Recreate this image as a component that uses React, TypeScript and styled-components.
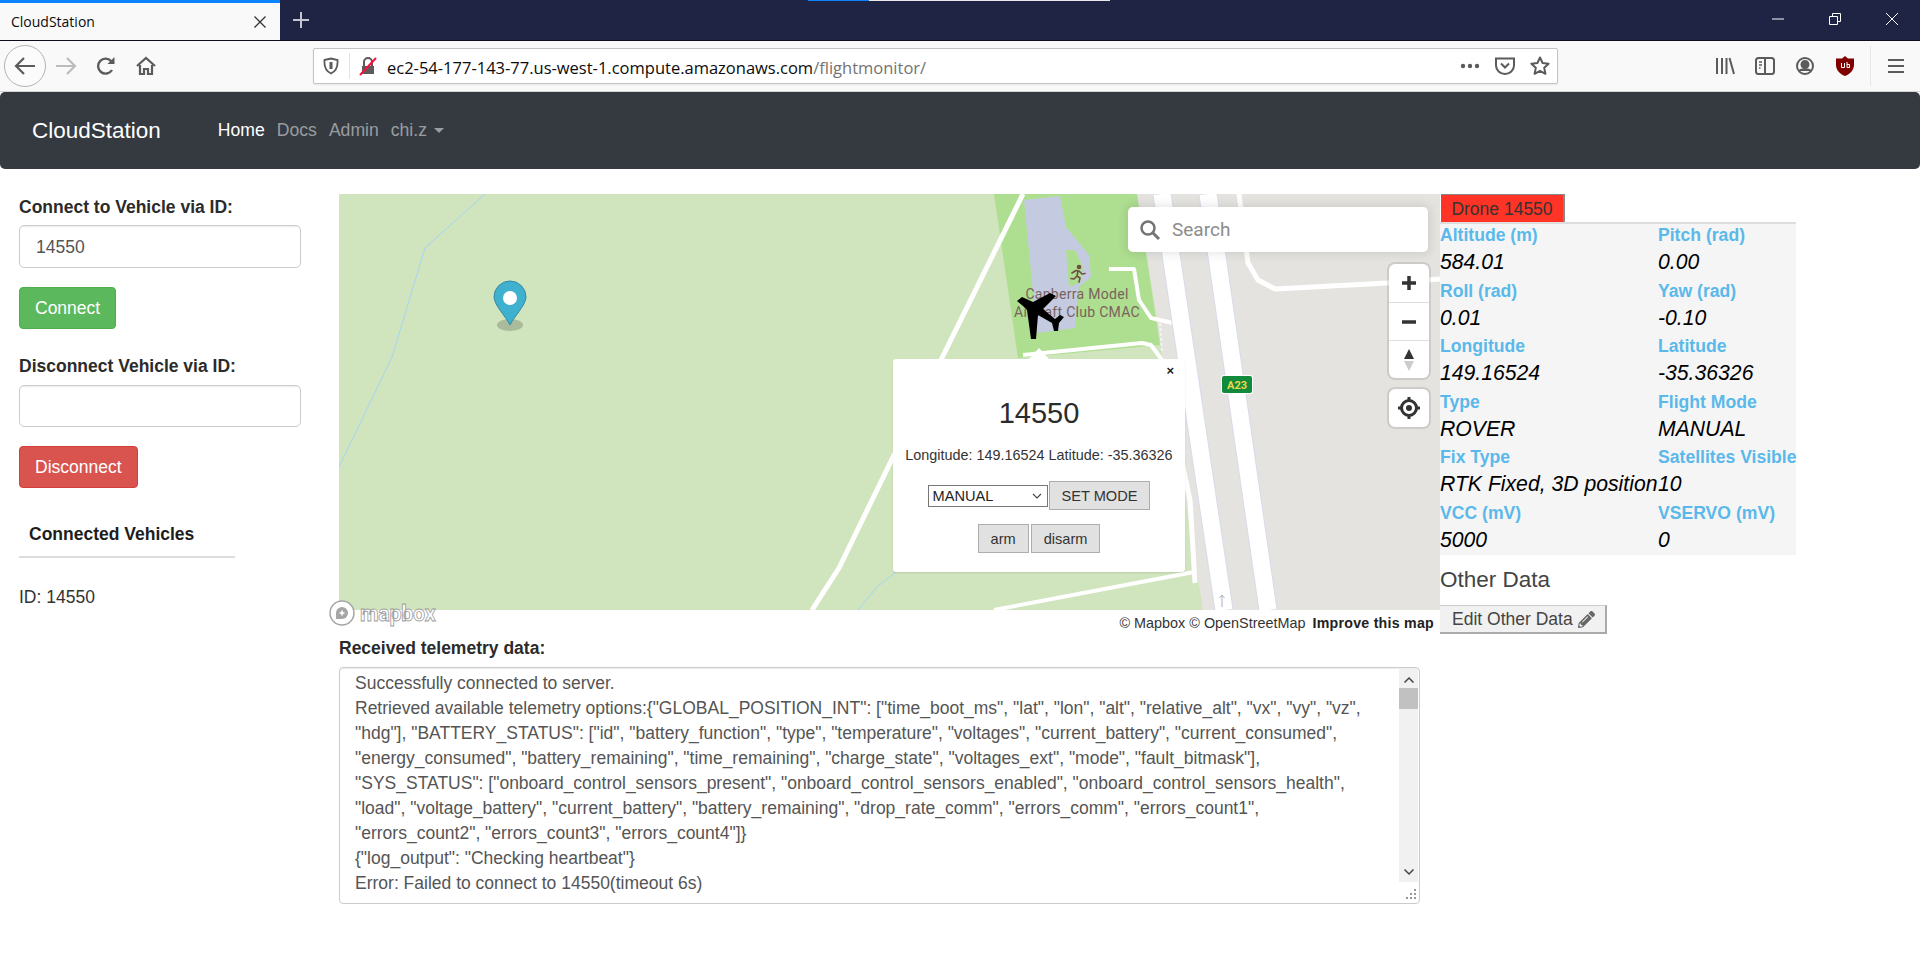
import * as React from "react";
import styled, { createGlobalStyle } from "styled-components";
import { FaPencilAlt } from "react-icons/fa";

const GlobalStyle = createGlobalStyle`
  html, body {
    margin: 0;
    padding: 0;
    background: #fff;
    font-family: "Liberation Sans", Arial, sans-serif;
    color: #333;
  }
  * { box-sizing: border-box; }
`;

const Page = styled.div`
  width: 1920px;
  height: 972px;
  overflow: hidden;
`;

/* browser chrome */
const TitleBar = styled.div`
  height: 41px;
  background: #1f2344;
  display: flex;
  align-items: stretch;
  position: relative;
  border-bottom: 1px solid #0c0c1a;
`;

const Tab = styled.div`
  width: 280px;
  background: #f9f9fa;
  border-top: 3px solid #0a84ff;
  display: flex;
  align-items: center;
  justify-content: space-between;
  padding: 0 13px 0 11px;
  font: 14px "Open Sans", sans-serif;
  color: #0c0c0d;
`;

const NewTab = styled.div`
  width: 42px;
  display: flex;
  align-items: center;
  justify-content: center;
`;

const Progress = styled.div`
  position: absolute;
  left: 808px;
  top: 0;
  width: 302px;
  height: 1px;
  background: linear-gradient(to right, #0a84ff 61px, #e8e8ec 61px);
`;

const WindowButtons = styled.div`
  margin-left: auto;
  display: flex;
`;

const WindowButton = styled.div`
  width: 57px;
  display: flex;
  align-items: center;
  justify-content: center;
  padding-bottom: 2px;
`;

const Toolbar = styled.div`
  height: 51px;
  background: #f9f9fa;
  display: flex;
  align-items: center;
  border-bottom: 1px solid #d4d4d6;
  padding-left: 4px;
`;

const BackCircle = styled.div`
  width: 42px;
  height: 42px;
  border-radius: 50%;
  border: 1px solid #b4b4b6;
  background: #fbfbfb;
  display: flex;
  align-items: center;
  justify-content: center;
  flex: none;
`;

const ToolIcon = styled.div<{ $w?: number }>`
  width: ${(p) => p.$w ?? 40}px;
  height: 32px;
  display: flex;
  align-items: center;
  justify-content: center;
  flex: none;
`;

const UrlBar = styled.div`
  width: 1245px;
  height: 36px;
  margin-left: 147px;
  margin-right: 147px;
  background: #fff;
  border: 1px solid #c4c4c6;
  border-radius: 2px;
  display: flex;
  align-items: center;
  box-shadow: 0 1px 2px rgba(0, 0, 0, 0.08);
  flex: none;
  padding-left: 7px;
`;

const UrlDivider = styled.div`
  width: 1px;
  height: 26px;
  background: #e2e2e4;
  margin: 0 8px 0 8px;
`;

const UrlText = styled.div`
  font: 16.5px "Open Sans", sans-serif;
  color: #0c0c0d;
  margin-left: 9px;
  padding-top: 3px;
  flex: 1;
  white-space: nowrap;
  span { color: #737373; }
`;

const ToolSeparator = styled.div`
  width: 1px;
  height: 40px;
  background: #e6e6e8;
  margin: 0 5px 0 5px;
`;

/* navbar */
const Navbar = styled.nav`
  height: 77px;
  background: #343a40;
  border-radius: 5px;
  display: flex;
  align-items: center;
  padding-left: 32px;
`;

const Brand = styled.div`
  font-size: 22.5px;
  color: #fff;
  margin-right: 57px;
`;

const NavLink = styled.div<{ $active?: boolean }>`
  font-size: 17.6px;
  color: ${(p) => (p.$active ? "#fff" : "rgba(255,255,255,.5)")};
  margin-right: 12px;
  display: flex;
  align-items: center;
`;

const Caret = styled.span`
  width: 0;
  height: 0;
  margin-left: 7px;
  border-top: 5px solid rgba(255, 255, 255, 0.5);
  border-left: 5px solid transparent;
  border-right: 5px solid transparent;
`;

/* page columns */
const Content = styled.div`
  display: flex;
  padding-top: 25px;
`;

const LeftColumn = styled.aside`
  width: 339px;
  flex: none;
  padding-left: 19px;
`;

const FieldLabel = styled.label<{ $line: number }>`
  display: block;
  font-size: 17.5px;
  font-weight: bold;
  color: #2b2b2b;
  height: 31px;
  line-height: ${(p) => p.$line}px;
`;

const TextInput = styled.input<{ $h: number }>`
  display: block;
  width: 282px;
  height: ${(p) => p.$h}px;
  margin-bottom: 19px;
  border: 1px solid #ccc;
  border-radius: 5px;
  padding: 1px 16px 0;
  font: 17.5px "Liberation Sans", sans-serif;
  color: #555;
  box-shadow: inset 0 1px 1px rgba(0, 0, 0, 0.075);
  outline: none;
`;

const ActionButton = styled.button<{ $tone: "go" | "stop" }>`
  display: block;
  height: 42px;
  margin: 0 0 25px;
  padding: 0 15px;
  border: 1px solid ${(p) => (p.$tone === "go" ? "#4cae4c" : "#d43f3a")};
  border-radius: 4px;
  background: ${(p) => (p.$tone === "go" ? "#5cb85c" : "#d9534f")};
  color: #fff;
  font: 17.5px "Liberation Sans", sans-serif;
`;

const VehiclesTitle = styled.div`
  width: 216px;
  padding: 0 0 9px 10px;
  margin-top: 34px;
  font-size: 17.5px;
  font-weight: bold;
  line-height: 25px;
  color: #1d1d1d;
  border-bottom: 2px solid #ddd;
`;

const VehicleRow = styled.div`
  font-size: 17.5px;
  line-height: 25px;
  margin-top: 27px;
`;

const CenterColumn = styled.main`
  width: 1101px;
  flex: none;
`;

const MapFrame = styled.div`
  position: relative;
  width: 1101px;
  height: 416px;
`;

const MapDrawing = styled.svg`
  display: block;
`;

const SearchBox = styled.div`
  position: absolute;
  left: 789px;
  top: 13px;
  width: 300px;
  height: 45px;
  background: #fff;
  border-radius: 5px;
  box-shadow: 0 0 10px 2px rgba(0, 0, 0, 0.1);
  display: flex;
  align-items: center;
  gap: 11px;
  padding-left: 11px;
  font: 19px Roboto, sans-serif;
  color: #8c8c8c;
`;

const ControlGroup = styled.div<{ $top: number }>`
  position: absolute;
  left: 1050px;
  top: ${(p) => p.$top}px;
  width: 40px;
  background: #fff;
  border-radius: 6px;
  box-shadow: 0 0 0 2px rgba(0, 0, 0, 0.1);
`;

const ControlCell = styled.div`
  height: 38px;
  display: flex;
  align-items: center;
  justify-content: center;
  & + & { border-top: 1px solid #ddd; }
`;

const Popup = styled.div`
  position: absolute;
  left: 554px;
  top: 165px;
  width: 292px;
  height: 213px;
  background: #fff;
  border-radius: 3px;
  box-shadow: 0 1px 2px rgba(0, 0, 0, 0.1);
  display: flex;
  flex-direction: column;
  align-items: center;
  padding-top: 38px;
  &::before {
    content: "";
    position: absolute;
    left: 136px;
    top: -11px;
    border-left: 10px solid transparent;
    border-right: 10px solid transparent;
    border-bottom: 11px solid #fff;
  }
`;

const PopupClose = styled.div`
  position: absolute;
  right: 11px;
  top: 4px;
  font-size: 13px;
  font-weight: bold;
  color: #222;
`;

const PopupTitle = styled.div`
  font-size: 29px;
  line-height: 33px;
  color: #2b2b2b;
`;

const PopupCoords = styled.div`
  font-size: 14.4px;
  line-height: 20px;
  margin-top: 15px;
  white-space: nowrap;
`;

const PopupRow = styled.div<{ $gap: number }>`
  display: flex;
  align-items: center;
  gap: 2px;
  margin-top: ${(p) => p.$gap}px;
`;

const ModeSelect = styled.select`
  appearance: none;
  width: 120px;
  height: 22px;
  margin-right: -1px;
  border: 1px solid #767676;
  border-radius: 0;
  background: #fff url("data:image/svg+xml,%3Csvg xmlns='http://www.w3.org/2000/svg' width='10' height='6'%3E%3Cpath d='M1 1l4 4 4-4' fill='none' stroke='%23444' stroke-width='1.100'/%3E%3C/svg%3E") no-repeat right 5px center;
  font: 14.6px "Liberation Sans", sans-serif;
  color: #222;
  padding: 0 0 0 4px;
`;

const PopupButton = styled.button`
  height: 29px;
  padding: 0 12px;
  background: #e1e1e1;
  border: 1px solid #adadad;
  font: 14.6px "Liberation Sans", sans-serif;
  color: #333;
`;

const MapLogo = styled.div`
  position: absolute;
  left: -10px;
  top: 406px;
  display: flex;
  align-items: center;
  gap: 5px;
`;

const LogoWord = styled.span`
  font: bold 21.5px Roboto, sans-serif;
  color: #fff;
  -webkit-text-stroke: 0.8px #9a9a9a;
  letter-spacing: -0.3px;
`;

const Attribution = styled.div`
  height: 26px;
  display: flex;
  justify-content: flex-end;
  align-items: center;
  padding: 0 6px 0 0;
  gap: 7px;
  font-size: 14.4px;
  color: #333;
  b { font-size: 14.2px; letter-spacing: 0.25px; color: #222; }
`;

const LogTitle = styled.div`
  font-size: 17.5px;
  font-weight: bold;
  line-height: 25px;
  color: #2b2b2b;
  height: 31px;
`;

const LogBox = styled.div`
  position: relative;
  width: 1081px;
  height: 237px;
  border: 1px solid #ccc;
  border-radius: 4px;
  padding: 3px 30px 0 15px;
  font-size: 17.5px;
  line-height: 25px;
  color: #555;
  box-shadow: inset 0 1px 1px rgba(0, 0, 0, 0.075);
`;

const LogLine = styled.div`
  white-space: nowrap;
`;

const ScrollTrack = styled.div`
  position: absolute;
  right: 1px;
  top: 1px;
  bottom: 21px;
  width: 19px;
  background: #f1f1f1;
  display: flex;
  flex-direction: column;
  align-items: center;
  justify-content: space-between;
  padding: 7px 0 6px;
`;

const ScrollThumb = styled.div`
  position: absolute;
  left: 0;
  top: 19px;
  width: 19px;
  height: 21px;
  background: #c1c1c1;
`;

const ResizeGrip = styled.svg`
  position: absolute;
  right: 2px;
  bottom: 2px;
`;

const RightColumn = styled.section`
  width: 356px;
  flex: none;
`;

const DroneTab = styled.div`
  width: 124px;
  height: 28px;
  margin-left: 1px;
  background: #ff3326;
  border-right: 2px solid #888;
  border-top: 1px solid #888;
  color: #333;
  font-size: 17.5px;
  text-align: center;
  line-height: 28px;
`;

const DataGrid = styled.div`
  display: grid;
  grid-template-columns: 218px 138px;
  background: #f5f5f5;
  border-top: 2px solid #ddd;
  height: 333px;
`;

const DataCell = styled.div`
  height: 55.5px;
  white-space: nowrap;
`;

const DataLabel = styled.div`
  font-size: 17.6px;
  font-weight: bold;
  line-height: 23px;
  color: #5ab9ea;
`;

const DataValue = styled.div`
  font-size: 21.2px;
  font-style: italic;
  line-height: 30px;
  color: #000;
`;

const OtherTitle = styled.div`
  font-size: 22.5px;
  line-height: 30px;
  color: #444;
  margin-top: 10px;
`;

const EditButton = styled.button`
  display: flex;
  align-items: center;
  gap: 5px;
  height: 29px;
  width: 167px;
  margin-top: 10px;
  padding: 0 0 0 12px;
  background: #f1f1f1;
  border: none;
  border-right: 2px solid #aaa;
  border-bottom: 2px solid #aaa;
  border-top: 1px solid #ccc;
  font: 17.5px "Liberation Sans", sans-serif;
  color: #444;
`;

const telemetry = [
  ["Altitude (m)", "584.01", "Pitch (rad)", "0.00"],
  ["Roll (rad)", "0.01", "Yaw (rad)", "-0.10"],
  ["Longitude", "149.16524", "Latitude", "-35.36326"],
  ["Type", "ROVER", "Flight Mode", "MANUAL"],
  ["Fix Type", "RTK Fixed, 3D position", "Satellites Visible", "10"],
  ["VCC (mV)", "5000", "VSERVO (mV)", "0"],
];

const logLines = [
  "Successfully connected to server.",
  'Retrieved available telemetry options:{"GLOBAL_POSITION_INT": ["time_boot_ms", "lat", "lon", "alt", "relative_alt", "vx", "vy", "vz",',
  '"hdg"], "BATTERY_STATUS": ["id", "battery_function", "type", "temperature", "voltages", "current_battery", "current_consumed",',
  '"energy_consumed", "battery_remaining", "time_remaining", "charge_state", "voltages_ext", "mode", "fault_bitmask"],',
  '"SYS_STATUS": ["onboard_control_sensors_present", "onboard_control_sensors_enabled", "onboard_control_sensors_health",',
  '"load", "voltage_battery", "current_battery", "battery_remaining", "drop_rate_comm", "errors_comm", "errors_count1",',
  '"errors_count2", "errors_count3", "errors_count4"]}',
  '{"log_output": "Checking heartbeat"}',
  "Error: Failed to connect to 14550(timeout 6s)",
];

const ic = "#5b5b5c";

function MapArt() {
  return (
    <MapDrawing width={1101} height={416} viewBox="339 194 1101 416">
      <rect x={339} y={194} width={1101} height={416} fill="#d0e4bd" />
      <polygon points="1137,194 1440,194 1440,610 1203,610" fill="#e4e3df" />
      <polygon points="994,194 1137,194 1160,345 1018,358" fill="#aede90" />
      <polygon
        points="1024,200 1060,196 1066,227 1089,255 1091,277 1079,287 1075,328 1037,333"
        fill="#c4cbe0"
      />
      <polygon points="1066,250 1075,250 1083,267 1080,283 1069,287" fill="#aede90" />
      <g fill="none" stroke="#a5d5f3" strokeWidth={1}>
        <polyline points="485,194 425,248 392,357 339,467" />
        <polyline points="896,572 877,587 858,610" />
      </g>
      <g fill="none" stroke="#fff" strokeLinejoin="round">
        <polyline points="1023,194 893,457 839,568 812,610" strokeWidth={5} />
        <polyline points="1109,269 1134,269 1139,300 1151,318 1173,323" strokeWidth={4} />
        <polyline points="1023,355 1142,343 1151,345 1162,360" strokeWidth={4} />
        <polyline points="994,610 1194,572" strokeWidth={4} />
        <polyline points="1160,360 1190,500 1195,583" strokeWidth={5} />
        <polyline
          points="1239,194 1248,263 1258,280 1275,289 1387,283 1440,279"
          strokeWidth={5}
        />
        <line x1={1160} y1={323} x2={1162} y2={353} strokeWidth={2} strokeDasharray="3 2" stroke="#f4f4f4" />
        <line x1={1162} y1={194} x2={1224} y2={610} strokeWidth={19} stroke="#d8dbe9" />
        <line x1={1162} y1={194} x2={1224} y2={610} strokeWidth={17} />
        <line x1={1208} y1={194} x2={1268} y2={610} strokeWidth={19} stroke="#d8dbe9" />
        <line x1={1208} y1={194} x2={1268} y2={610} strokeWidth={17} />
        <path d="M1222 607v-12M1219.500 598l2.500-3 2.500 3" stroke="#a9aec4" strokeWidth={1} />
      </g>
      <rect x={1221} y={375} width={32} height={19} rx={3} fill="#fff" />
      <rect x={1222} y={376} width={30} height={17} rx={2} fill="#118a3c" />
      <text x={1237} y={389} textAnchor="middle" fontFamily="Roboto, sans-serif" fontSize={11} fontWeight={700} fill="#e9d94a">
        A23
      </text>
      <g fill="none" stroke="#6f4e43" strokeWidth={1.6} strokeLinecap="round" strokeLinejoin="round">
        <circle cx={1079} cy={267} r={1.500} fill="#6f4e43" />
        <path d="M1072 273l4-2.500 3 .5 3 3 3-.5M1078 271l-1 5 3 2-1 4M1077 276l-3 3-3-.5" />
      </g>
      <g fontFamily="Roboto, sans-serif" fontSize={14} letterSpacing={0.3} fill="#7a625c" textAnchor="middle">
        <text x={1077} y={299}>Canberra Model</text>
        <text x={1077} y={317}>Aircraft Club CMAC</text>
      </g>
      <polygon
        fill="#000"
        points="1017,301 1022,297 1033,302 1050,293 1056,296 1043,309 1055,319 1060,315 1064,317 1059,323 1058,331 1054,331 1052,323 1038,315 1036,339 1031,339 1027,310 1023,306"
      />
      <ellipse cx={510} cy={325} rx={13} ry={6} fill="#000" opacity={0.18} />
      <path
        d="M510 325c-3-7-16-20-16-28a16 16 0 0 1 32 0c0 8-13 21-16 28z"
        fill="#3fb1ce"
        stroke="#2f8ba6"
        strokeWidth={1}
      />
      <ellipse cx={510} cy={298} rx={7} ry={7} fill="#fff" />
    </MapDrawing>
  );
}

export default function App() {
  return (
    <Page>
      <GlobalStyle />
      <TitleBar>
        <Progress />
        <Tab>
          CloudStation
          <svg width="14" height="14" viewBox="0 0 14 14">
            <path d="M1.500 1.500l11 11M12.500 1.500l-11 11" stroke="#333" strokeWidth="1.300" />
          </svg>
        </Tab>
        <NewTab>
          <svg width="18" height="18" viewBox="0 0 18 18">
            <path d="M9 1v16M1 9h16" stroke="#c5c6d2" strokeWidth="2" />
          </svg>
        </NewTab>
        <WindowButtons>
          <WindowButton>
            <svg width="14" height="14" viewBox="0 0 14 14">
              <path d="M1 7h12" stroke="#fff" strokeWidth="1" />
            </svg>
          </WindowButton>
          <WindowButton>
            <svg width="14" height="14" viewBox="0 0 14 14">
              <path d="M1.500 4.500h8v8h-8zM4.500 4V1.500h8v8H10" fill="none" stroke="#fff" strokeWidth="1" />
            </svg>
          </WindowButton>
          <WindowButton>
            <svg width="14" height="14" viewBox="0 0 14 14">
              <path d="M1 1l12 12M13 1L1 13" stroke="#fff" strokeWidth="1" />
            </svg>
          </WindowButton>
        </WindowButtons>
      </TitleBar>

      <Toolbar>
        <BackCircle>
          <svg width="22" height="20" viewBox="0 0 22 20" fill="none" stroke={ic} strokeWidth="2.200">
            <path d="M21 10H2M10 2l-8 8 8 8" />
          </svg>
        </BackCircle>
        <ToolIcon>
          <svg width="22" height="20" viewBox="0 0 22 20" fill="none" stroke="#bcbcbd" strokeWidth="2.200">
            <path d="M1 10h19M12 2l8 8-8 8" />
          </svg>
        </ToolIcon>
        <ToolIcon>
          <svg width="20" height="20" viewBox="0 0 20 20" fill="none" stroke={ic} strokeWidth="2.400">
            <path d="M16 14a7.500 7.500 0 1 1-.5-8.500" />
            <path d="M18.500 1v7h-7z" fill={ic} stroke="none" />
          </svg>
        </ToolIcon>
        <ToolIcon>
          <svg width="20" height="20" viewBox="0 0 20 20" fill="none" stroke={ic} strokeWidth="2.200">
            <path d="M1 10l9-8 9 8" />
            <path d="M4 9v9h4v-5h4v5h4V9" />
          </svg>
        </ToolIcon>
        <UrlBar>
          <ToolIcon $w={20}>
            <svg width="16" height="18" viewBox="0 0 16 18" fill="none" stroke={ic} strokeWidth="1.800">
              <path d="M1.500 3L8 1.500 14.500 3c.5 6-1.500 11-6.500 13.500C3 14 1 9 1.500 3z" />
              <path d="M8 5v7" strokeWidth="3" />
            </svg>
          </ToolIcon>
          <UrlDivider />
          <ToolIcon $w={20}>
            <svg width="20" height="20" viewBox="0 0 20 20" fill="none">
              <path d="M4 10h12v8H4z" fill="#5b5b5c" />
              <path d="M6 10V6a4 4 0 0 1 8 0v4" stroke="#5b5b5c" strokeWidth="2" />
              <path d="M2 19L18 2" stroke="#f7113f" strokeWidth="2" />
            </svg>
          </ToolIcon>
          <UrlText>
            ec2-54-177-143-77.us-west-1.compute.amazonaws.com<span>/flightmonitor/</span>
          </UrlText>
          <ToolIcon $w={34}>
            <svg width="20" height="6" viewBox="0 0 20 6" fill={ic}>
              <circle cx="3" cy="3" r="2.200" />
              <circle cx="10" cy="3" r="2.200" />
              <circle cx="17" cy="3" r="2.200" />
            </svg>
          </ToolIcon>
          <ToolIcon $w={36}>
            <svg width="20" height="18" viewBox="0 0 20 18" fill="none" stroke={ic} strokeWidth="2">
              <path d="M1 1.500h18v7a9 8.500 0 0 1-18 0z" />
              <path d="M6 6.500l4 4 4-4" />
            </svg>
          </ToolIcon>
          <ToolIcon $w={34}>
            <svg width="20" height="20" viewBox="0 0 20 20" fill="none" stroke={ic} strokeWidth="2" strokeLinejoin="round">
              <path d="M10 1.500l2.600 5.500 6 .7-4.400 4.100 1.200 6-5.400-3-5.400 3 1.200-6L1.400 7.700l6-.7z" />
            </svg>
          </ToolIcon>
        </UrlBar>
        <ToolIcon>
          <svg width="20" height="18" viewBox="0 0 20 18" stroke={ic} strokeWidth="2">
            <path d="M2 1v16M7 1v16M11.500 1v16M14.500 1l4.500 16" />
          </svg>
        </ToolIcon>
        <ToolIcon>
          <svg width="20" height="18" viewBox="0 0 20 18" fill="none" stroke={ic} strokeWidth="2">
            <rect x="1" y="1" width="18" height="16" rx="2.500" />
            <path d="M10 1v16" />
            <path d="M4 5h3M4 8h3M4 11h1.500" strokeWidth="1.400" />
          </svg>
        </ToolIcon>
        <ToolIcon>
          <svg width="18" height="18" viewBox="0 0 18 18" fill="none" stroke={ic} strokeWidth="2">
            <circle cx="9" cy="9" r="8" />
            <circle cx="9" cy="7.500" r="3.500" fill={ic} />
            <path d="M3 14c2-2.500 10-2.500 12 0" fill={ic} />
          </svg>
        </ToolIcon>
        <ToolIcon>
          <svg width="18" height="20" viewBox="0 0 18 20">
            <path d="M9 0l3 2.500h6V9c0 5-4 9-9 11-5-2-9-6-9-11V2.500h6z" fill="#800000" />
            <path d="M5.500 7v4.500h3V7M11 6v5.500h2.500V8.500H11" fill="none" stroke="#fff" strokeWidth="1" />
          </svg>
        </ToolIcon>
        <ToolSeparator />
        <ToolIcon $w={40}>
          <svg width="16" height="16" viewBox="0 0 16 16" stroke={ic} strokeWidth="2">
            <path d="M0 2h16M0 8h16M0 14h16" />
          </svg>
        </ToolIcon>
      </Toolbar>

      <Navbar>
        <Brand>CloudStation</Brand>
        <NavLink $active>Home</NavLink>
        <NavLink>Docs</NavLink>
        <NavLink>Admin</NavLink>
        <NavLink>
          chi.z
          <Caret />
        </NavLink>
      </Navbar>

      <Content>
        <LeftColumn>
          <FieldLabel $line={26}>Connect to Vehicle via ID:</FieldLabel>
          <TextInput $h={43} defaultValue="14550" />
          <ActionButton $tone="go">Connect</ActionButton>
          <FieldLabel $line={24}>Disconnect Vehicle via ID:</FieldLabel>
          <TextInput $h={42} />
          <ActionButton $tone="stop">Disconnect</ActionButton>
          <VehiclesTitle>Connected Vehicles</VehiclesTitle>
          <VehicleRow>ID: 14550</VehicleRow>
        </LeftColumn>

        <CenterColumn>
          <MapFrame>
            <MapArt />
            <SearchBox>
              <svg width="22" height="22" viewBox="0 0 22 22" fill="none" stroke="#757575" strokeWidth="2.500">
                <circle cx="9" cy="9" r="6.500" />
                <path d="M14 14l6 6" strokeWidth="3" />
              </svg>
              Search
            </SearchBox>
            <ControlGroup $top={70}>
              <ControlCell>
                <svg width="16" height="16" viewBox="0 0 16 16" stroke="#333" strokeWidth="3.500">
                  <path d="M8 1v14M1 8h14" />
                </svg>
              </ControlCell>
              <ControlCell>
                <svg width="16" height="16" viewBox="0 0 16 16" stroke="#333" strokeWidth="3.500">
                  <path d="M1 8h14" />
                </svg>
              </ControlCell>
              <ControlCell>
                <svg width="12" height="24" viewBox="0 0 12 24">
                  <path d="M6 1l5 10H1z" fill="#333" />
                  <path d="M6 23l5-10H1z" fill="#ccc" />
                </svg>
              </ControlCell>
            </ControlGroup>
            <ControlGroup $top={195}>
              <ControlCell>
                <svg width="24" height="24" viewBox="0 0 24 24" fill="none" stroke="#333" strokeWidth="3">
                  <circle cx="12" cy="12" r="7.500" />
                  <circle cx="12" cy="12" r="3" fill="#333" stroke="none" />
                  <path d="M12 1v3M12 20v3M1 12h3M20 12h3" />
                </svg>
              </ControlCell>
            </ControlGroup>
            <Popup>
              <PopupClose>×</PopupClose>
              <PopupTitle>14550</PopupTitle>
              <PopupCoords>Longitude: 149.16524 Latitude: -35.36326</PopupCoords>
              <PopupRow $gap={16}>
                <ModeSelect defaultValue="MANUAL">
                  <option>MANUAL</option>
                </ModeSelect>
                <PopupButton>SET MODE</PopupButton>
              </PopupRow>
              <PopupRow $gap={14}>
                <PopupButton>arm</PopupButton>
                <PopupButton>disarm</PopupButton>
              </PopupRow>
            </Popup>
            <MapLogo>
              <svg width="26" height="26" viewBox="0 0 26 26">
                <circle cx="13" cy="13" r="12" fill="#fff" stroke="#a5a5a5" strokeWidth="1.500" />
                <path d="M7 19v-6a6 6 0 1 1 6 6z" fill="#a5a5a5" />
                <path d="M13 10.500v5M10.500 13h5" stroke="#fff" strokeWidth="1.600" />
              </svg>
              <LogoWord>mapbox</LogoWord>
            </MapLogo>
          </MapFrame>
          <Attribution>
            <span>© Mapbox © OpenStreetMap</span>
            <b>Improve this map</b>
          </Attribution>
          <LogTitle>Received telemetry data:</LogTitle>
          <LogBox>
            {logLines.map((line) => (
              <LogLine key={line}>{line}</LogLine>
            ))}
            <ScrollTrack>
              <svg width="12" height="8" viewBox="0 0 12 8" fill="none" stroke="#444" strokeWidth="1.500">
                <path d="M1.500 6.500L6 2l4.500 4.500" />
              </svg>
              <ScrollThumb />
              <svg width="12" height="8" viewBox="0 0 12 8" fill="none" stroke="#444" strokeWidth="1.500">
                <path d="M1.500 1.500L6 6l4.500-4.500" />
              </svg>
            </ScrollTrack>
            <ResizeGrip width="14" height="14" viewBox="0 0 14 14" fill="#999">
              <path d="M11 2h2v2h-2zM7 6h2v2H7zM11 6h2v2h-2zM3 10h2v2H3zM7 10h2v2H7zM11 10h2v2h-2z" />
            </ResizeGrip>
          </LogBox>
        </CenterColumn>

        <RightColumn>
          <DroneTab>Drone 14550</DroneTab>
          <DataGrid>
            {telemetry.flatMap(([a, av, b, bv]) => [
              <DataCell key={a}>
                <DataLabel>{a}</DataLabel>
                <DataValue>{av}</DataValue>
              </DataCell>,
              <DataCell key={b}>
                <DataLabel>{b}</DataLabel>
                <DataValue>{bv}</DataValue>
              </DataCell>,
            ])}
          </DataGrid>
          <OtherTitle>Other Data</OtherTitle>
          <EditButton>
            Edit Other Data
            <FaPencilAlt size={17} color="#666" />
          </EditButton>
        </RightColumn>
      </Content>
    </Page>
  );
}
